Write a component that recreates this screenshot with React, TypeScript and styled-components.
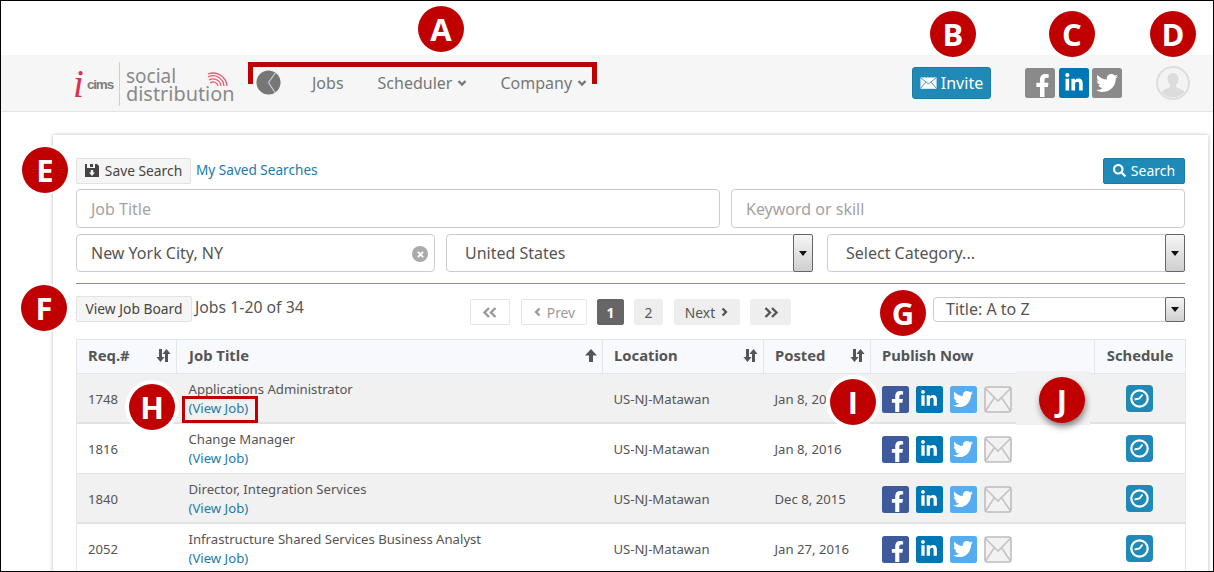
import React from "react";
import styled, { createGlobalStyle } from "styled-components";
import { FaFacebookF, FaLinkedinIn, FaTwitter, FaSearch, FaTimes } from "react-icons/fa";

const Global = createGlobalStyle`
  html, body { margin: 0; padding: 0; background: #fff; }
  body { font-family: "Noto Sans", "Open Sans", sans-serif; color: #555; }
  * { box-sizing: border-box; }
`;

const Frame = styled.div`
  position: relative;
  width: 1214px;
  height: 572px;
  overflow: hidden;
  border: 1px solid #000;
  padding-top: 54px;
  background: #fff;
`;

const NavBar = styled.header`
  display: flex;
  align-items: center;
  height: 57px;
  padding: 0 23px 0 71px;
  background: #f6f6f6;
  border-bottom: 1px solid #e3e3e3;
`;

const Logo = styled.div`
  display: flex;
  align-items: center;
  width: 184px;
  height: 44px;
  margin-top: 1px;
`;

const LogoI = styled.span`
  font: italic 400 39px/1 "Liberation Serif", serif;
  color: #d8324f;
  width: 14px;
  padding-left: 1px;
`;

const LogoCims = styled.span`
  font: 700 13.5px/1 "Liberation Sans", sans-serif;
  letter-spacing: -1.2px;
  color: #7d7d7d;
  width: 33px;
  padding-left: 1px;
  margin-top: 2px;
`;

const LogoText = styled.div`
  position: relative;
  height: 44px;
  border-left: 1px solid #cfcfcf;
  padding: 6px 0 0 6px;
  color: #8a8a8a;
  font: 400 19.9px/17px "Noto Sans", sans-serif;
`;

const LogoLine = styled.div<{ $size: number }>`
  display: block;
  font-size: ${(p) => p.$size}px;
`;

const Signal = styled.svg`
  position: absolute;
  left: 87px;
  top: 8px;
`;

const PieIcon = styled.svg`
  display: block;
  margin-top: -1px;
`;

const NavLink = styled.a<{ $gap: number }>`
  display: flex;
  align-items: center;
  gap: 5px;
  margin-left: ${(p) => p.$gap}px;
  font-size: 16px;
  color: #777;
`;

const NavRight = styled.div`
  margin-left: auto;
  display: flex;
  align-items: center;
`;

const InviteButton = styled.button`
  display: flex;
  align-items: center;
  justify-content: center;
  gap: 4px;
  width: 79px;
  height: 32px;
  padding: 0;
  background: #1f8ab8;
  border: 1px solid #1a7aa4;
  border-radius: 3px;
  color: #fff;
  font: 400 16px "Noto Sans", sans-serif;
`;

const NavSocial = styled.div`
  display: flex;
  gap: 3.5px;
  margin-left: 34px;
`;

const Avatar = styled.svg`
  display: block;
  margin-left: 34px;
`;

const Tile = styled.span<{ $bg: string; $size: number }>`
  display: flex;
  align-items: center;
  justify-content: center;
  overflow: hidden;
  width: ${(p) => p.$size}px;
  height: ${(p) => p.$size}px;
  border-radius: 2.5px;
  background: ${(p) => p.$bg};
  color: #fff;
`;

const FbGlyph = styled(FaFacebookF)`
  margin: 5px -5px 0 0;
`;

const Card = styled.main`
  margin: 23px 5px 0 52px;
  padding: 23px 23px 0;
  height: 500px;
  background: #fff;
  box-shadow: 0 0 4px rgba(0, 0, 0, 0.28);
`;

const TopRow = styled.div`
  display: flex;
  align-items: center;
  height: 26px;
`;

const PlainButton = styled.button<{ $width: number }>`
  display: flex;
  align-items: center;
  justify-content: center;
  gap: 6px;
  width: ${(p) => p.$width}px;
  height: 26px;
  padding: 0 0 2px;
  background: #f5f5f5;
  border: 1px solid #e2e2e2;
  border-radius: 2px;
  color: #444;
  font: 400 13.8px "Noto Sans", sans-serif;
`;

const SavedLink = styled.a`
  margin-left: 5px;
  margin-top: -4px;
  font-size: 13.6px;
  color: #1c7ba6;
`;

const SearchButton = styled.button`
  display: flex;
  align-items: center;
  justify-content: center;
  gap: 5px;
  margin-left: auto;
  width: 82px;
  height: 26px;
  padding: 0 0 2px;
  background: #1f8ab8;
  border: 1px solid #1a7aa4;
  border-radius: 2px;
  color: #fff;
  font: 400 14px "Noto Sans", sans-serif;
`;

const FieldRow = styled.div<{ $cols: string; $top: number }>`
  display: grid;
  grid-template-columns: ${(p) => p.$cols};
  gap: 11px;
  margin-top: ${(p) => p.$top}px;
`;

const Field = styled.div<{ $height: number; $muted?: boolean; $pad?: number; $trim?: number; $top?: number; $lift?: number }>`
  position: relative;
  display: flex;
  align-items: center;
  height: ${(p) => p.$height}px;
  margin-right: ${(p) => p.$trim ?? 0}px;
  margin-top: ${(p) => p.$top ?? 0}px;
  padding: 0 0 ${(p) => p.$lift ?? 0}px ${(p) => p.$pad ?? 14}px;
  background: #fff;
  border: 1px solid #ccc;
  border-radius: 4px;
  font-size: 16px;
  color: ${(p) => (p.$muted ? "#a3a3a3" : "#555")};
`;

const ClearIcon = styled.span`
  position: absolute;
  right: 6px;
  top: 11px;
  display: flex;
  align-items: center;
  justify-content: center;
  width: 16px;
  height: 16px;
  border-radius: 50%;
  background: #aaa;
  color: #fff;
`;

const SelectArrow = styled.span`
  position: absolute;
  right: -1px;
  top: -1px;
  bottom: -1px;
  width: 20px;
  display: flex;
  align-items: center;
  justify-content: center;
  background: linear-gradient(#f6f6f6, #cfcfcf);
  border: 1px solid #666;
  border-radius: 2px;
  &::after {
    content: "";
    border-left: 4.5px solid transparent;
    border-right: 4.5px solid transparent;
    border-top: 5px solid #111;
  }
`;

const Rule = styled.hr`
  margin: 11px 0 12px;
  border: 0;
  border-top: 1px solid #7b90a8;
`;

const ToolRow = styled.div`
  display: grid;
  grid-template-columns: 394px 1fr 252px;
  height: 29px;
`;

const ToolLeft = styled.div`
  display: flex;
  gap: 3px;
`;

const JobsCount = styled.span`
  font-size: 15.8px;
  line-height: 22px;
  color: #555;
`;

const Pager = styled.nav`
  display: flex;
  padding-top: 3px;
  height: 29px;
`;

const PageItem = styled.span<{ $w: number; $gap: number; $tone: "ghost" | "solid" | "active" }>`
  display: flex;
  align-items: center;
  justify-content: center;
  gap: 4px;
  width: ${(p) => p.$w}px;
  height: 26px;
  margin-left: ${(p) => p.$gap}px;
  border-radius: 2px;
  font-size: 13.8px;
  border: 1px solid ${(p) => (p.$tone === "active" ? "#666" : p.$tone === "ghost" ? "#e6e6e6" : "#eee")};
  background: ${(p) => (p.$tone === "active" ? "#666" : p.$tone === "ghost" ? "#fff" : "#eee")};
  color: ${(p) => (p.$tone === "active" ? "#fff" : p.$tone === "ghost" ? "#999" : "#555")};
  font-weight: ${(p) => (p.$tone === "active" ? 700 : 400)};
`;

const JobTable = styled.table`
  width: 1109px;
  margin-top: 14px;
  table-layout: fixed;
  border-collapse: collapse;
`;

const HeadCell = styled.th<{ $center?: boolean }>`
  height: 34px;
  padding: ${(p) => (p.$center ? "0 0 3px" : "0 5px 3px 11px")};
  background: #f7f9fd;
  border: 1px solid #e3e6ea;
  font-size: 14.8px;
  font-weight: 700;
  color: #555;
  text-align: ${(p) => (p.$center ? "center" : "left")};
  &:nth-child(2) { padding-left: 12px; }
`;

const HeadInner = styled.div`
  display: flex;
  align-items: center;
  justify-content: space-between;
`;

const Row = styled.tr<{ $odd: boolean }>`
  height: 50px;
  background: ${(p) => (p.$odd ? "#f1f1f1" : "#fff")};
  border-bottom: 1px solid #e2e2e2;
`;

const Cell = styled.td<{ $center?: boolean; $heavy: boolean }>`
  padding: 1px 0 0 11px;
  font-size: 13.15px;
  color: #555;
  text-align: ${(p) => (p.$center ? "center" : "left")};
  box-shadow: ${(p) => (p.$heavy ? "inset 0 -1px 0 #e2e2e2" : "none")};
  &:nth-child(2) { padding-left: 12px; }
  &:first-child { border-left: 1px solid #e3e6ea; }
  &:last-child { border-right: 1px solid #e3e6ea; padding: 0; }
`;

const TitleText = styled.div`
  line-height: 19px;
`;

const ViewLink = styled.a`
  display: block;
  line-height: 19px;
  color: #1c7ba6;
`;

const Publish = styled.div`
  display: flex;
  align-items: center;
  gap: 7px;
`;

const ClockWrap = styled.div`
  display: flex;
  justify-content: center;
`;

const Badge = styled.div<{ $x: number; $y: number; $ring?: number; $shadow?: boolean }>`
  position: absolute;
  left: ${(p) => p.$x - 23 - 1}px;
  top: ${(p) => p.$y - 23 - 1}px;
  display: flex;
  align-items: center;
  justify-content: center;
  width: 46px;
  height: 46px;
  border-radius: 50%;
  background: #c00000;
  color: #fff;
  font: 700 31px/1 "Open Sans", sans-serif;
  box-shadow: ${(p) =>
    p.$shadow ? "1px 4px 6px rgba(0,0,0,.45)" : `0 0 0 ${p.$ring ?? 2}px #fff`};
`;

const Patch = styled.div`
  position: absolute;
  left: 1015px;
  top: 370px;
  width: 74px;
  height: 54px;
  background: #f1f1f1;
`;

const Bracket = styled.div`
  position: absolute;
  left: 247px;
  top: 61px;
  width: 349px;
  height: 22px;
  border: 5px solid #c00000;
  border-bottom: 0;
`;

const HighlightBox = styled.div`
  position: absolute;
  left: 181px;
  top: 395px;
  width: 76px;
  height: 27px;
  border: 3px solid #c00000;
`;

const MailIcon = ({ size = 20, color = "#fff" }: { size?: number; color?: string }) => (
  <svg width={size} height={size * 0.72} viewBox="0 0 20 14.4">
    <rect x="0.5" y="0.5" width="19" height="13.4" fill={color} />
    <path d="M0.5 .8 L10 8 L19.5 .8 M.5 13.6 L7 6 M19.5 13.6 L13 6" fill="none" stroke="#1f8ab8" strokeWidth="1" />
  </svg>
);

const MailTile = () => (
  <svg width="28" height="27" viewBox="0 0 28 27">
    <rect x="1" y="1" width="26" height="25" rx="2.5" fill="#f2f2f2" stroke="#bdbdbd" strokeWidth="1.6" />
    <path d="M1.5 2.5 L14 15 L26.5 2.5 M1.5 25 L10.5 11.5 M26.5 25 L17.5 11.5" fill="none" stroke="#c4c4c4" strokeWidth="1.6" />
  </svg>
);

const ClockTile = () => (
  <svg width="27" height="27" viewBox="0 0 27 27">
    <rect width="27" height="27" rx="4" fill="#1f8ab8" />
    <circle cx="13.5" cy="13.5" r="8.2" fill="none" stroke="#fff" strokeWidth="2.2" />
    <path d="M8.5 14.5 L13.5 13.5 L16.5 9.5" fill="none" stroke="#fff" strokeWidth="1.8" />
  </svg>
);

const SortIcon = () => (
  <svg width="15" height="13" viewBox="0 0 15 13">
    <path d="M3 0h3v8h2.6L4.5 13 .4 8H3z M9 5h-2.6L10.5 0l4.1 5H12v8H9z" fill="#555" />
  </svg>
);

const ArrowUpIcon = () => (
  <svg width="12" height="13" viewBox="0 0 12 13">
    <path d="M6 0L12 6.5H8V13H4V6.5H0z" fill="#555" />
  </svg>
);

const SaveIcon = () => (
  <svg width="14" height="13" viewBox="0 0 14 13">
    <path d="M0 0h2v4h8V0h2l2 2v11H0z" fill="#444" />
    <path d="M5 0h3v3H5z" fill="#444" />
    <path d="M5.8 6h2.4v2.5H10L7 12 4 8.5h1.8z" fill="#f5f5f5" />
  </svg>
);

const Chevron = ({ dir, size = 10 }: { dir: "down" | "left" | "right"; size?: number }) => {
  const d = dir === "down" ? "M1.5 3 L5 6.5 L8.5 3" : dir === "left" ? "M6.5 1.5 L3 5 L6.5 8.5" : "M3.5 1.5 L7 5 L3.5 8.5";
  return (
    <svg width={size} height={size} viewBox="0 0 10 10">
      <path d={d} fill="none" stroke="currentColor" strokeWidth="2.3" />
    </svg>
  );
};

const DoubleChevron = ({ dir }: { dir: "left" | "right" }) => (
  <svg width="16" height="11" viewBox="0 0 16 11">
    <path
      d={dir === "left" ? "M7 1 L2.5 5.5 L7 10 M13.5 1 L9 5.5 L13.5 10" : "M2.5 1 L7 5.5 L2.5 10 M9 1 L13.5 5.5 L9 10"}
      fill="none"
      stroke="currentColor"
      strokeWidth="2.4"
    />
  </svg>
);

const Social = ({ size, gray }: { size: number; gray?: boolean }) => {
  const glyph = Math.round(size * 0.66);
  return (
    <>
      <Tile $size={size} $bg={gray ? "#8a8a8a" : "#3f5a9a"}>
        <FbGlyph size={glyph + 3} />
      </Tile>
      <Tile $size={size} $bg="#0077b5">
        <FaLinkedinIn size={glyph} />
      </Tile>
      <Tile $size={size} $bg={gray ? "#8a8a8a" : "#55acee"}>
        <FaTwitter size={glyph + 2} />
      </Tile>
    </>
  );
};

const jobs = [
  { id: "1748", title: "Applications Administrator", date: "Jan 8, 2016" },
  { id: "1816", title: "Change Manager", date: "Jan 8, 2016" },
  { id: "1840", title: "Director, Integration Services", date: "Dec 8, 2015" },
  { id: "2052", title: "Infrastructure Shared Services Business Analyst", date: "Jan 27, 2016" },
];

const badges: { l: string; x: number; y: number; ring?: number; shadow?: boolean }[] = [
  { l: "A", x: 441, y: 29 },
  { l: "B", x: 953, y: 34 },
  { l: "C", x: 1072, y: 34 },
  { l: "D", x: 1173, y: 34 },
  { l: "E", x: 45, y: 170 },
  { l: "F", x: 44, y: 308 },
  { l: "G", x: 903, y: 313 },
  { l: "H", x: 152, y: 407, ring: 4 },
  { l: "I", x: 853, y: 402, ring: 4 },
  { l: "J", x: 1062, y: 400, shadow: true },
];

export default function App() {
  return (
    <Frame>
      <Global />
      <NavBar>
        <Logo>
          <LogoI>i</LogoI>
          <LogoCims>cims</LogoCims>
          <LogoText>
            <LogoLine $size={19}>social</LogoLine>
            <LogoLine $size={19.9}>distribution</LogoLine>
            <Signal width="22" height="20" viewBox="0 0 22 20">
              <g fill="none" stroke="#e4596f" strokeWidth="1.3">
                <path d="M3 13a5 5 0 0 1 8 3" />
                <path d="M2 10a8 8 0 0 1 12 6" />
                <path d="M1 7a11 11 0 0 1 16 9" />
                <path d="M1 4a14 14 0 0 1 19 12" />
              </g>
            </Signal>
          </LogoText>
        </Logo>
        <PieIcon width="25" height="25" viewBox="0 0 25 25">
          <circle cx="12.5" cy="12.5" r="12" fill="#777" />
          <path d="M12.5 12.5 L20 2 M12.5 12.5 L19 22.5" stroke="#c7d3de" strokeWidth="1.2" fill="none" />
        </PieIcon>
        <NavLink $gap={31}>Jobs</NavLink>
        <NavLink $gap={34}>
          Scheduler <Chevron dir="down" />
        </NavLink>
        <NavLink $gap={33}>
          Company <Chevron dir="down" />
        </NavLink>
        <NavRight>
          <InviteButton>
            <MailIcon size={17} />
            Invite
          </InviteButton>
          <NavSocial>
            <Social size={30} gray />
          </NavSocial>
          <Avatar width="34" height="34" viewBox="0 0 34 34">
            <circle cx="17" cy="17" r="16" fill="#f3f3f3" stroke="#dedede" strokeWidth="2" />
            <path d="M17 7c3.6 0 5.4 2.6 5.4 6 0 2.6-1 4.6-2.4 6v2l7 3.5c.8.5 1 1 1 2A15 15 0 0 1 6 26.5c0-1 .2-1.5 1-2L14 21v-2c-1.4-1.4-2.4-3.4-2.4-6 0-3.4 1.8-6 5.4-6z" fill="#dcdcdc" />
          </Avatar>
        </NavRight>
      </NavBar>

      <Card>
        <TopRow>
          <PlainButton $width={115}>
            <SaveIcon />
            Save Search
          </PlainButton>
          <SavedLink>My Saved Searches</SavedLink>
          <SearchButton>
            <FaSearch size={13} />
            Search
          </SearchButton>
        </TopRow>
        <FieldRow $cols="644px 454px" $top={5}>
          <Field $height={39} $muted>Job Title</Field>
          <Field $height={39} $muted>Keyword or skill</Field>
        </FieldRow>
        <FieldRow $cols="359px 1fr 358px" $top={6}>
          <Field $height={38}>
            New York City, NY
            <ClearIcon>
              <FaTimes size={9} />
            </ClearIcon>
          </Field>
          <Field $height={38} $pad={18} $trim={3}>
            United States
            <SelectArrow />
          </Field>
          <Field $height={38} $pad={18}>
            Select Category...
            <SelectArrow />
          </Field>
        </FieldRow>
        <Rule />
        <ToolRow>
          <ToolLeft>
            <PlainButton $width={116}>View Job Board</PlainButton>
            <JobsCount>Jobs 1-20 of 34</JobsCount>
          </ToolLeft>
          <Pager>
            <PageItem $tone="ghost" $w={40} $gap={0}>
              <DoubleChevron dir="left" />
            </PageItem>
            <PageItem $tone="ghost" $w={66} $gap={11}>
              <Chevron dir="left" />
              Prev
            </PageItem>
            <PageItem $tone="active" $w={27} $gap={10}>1</PageItem>
            <PageItem $tone="solid" $w={29} $gap={10}>2</PageItem>
            <PageItem $tone="solid" $w={66} $gap={11}>
              Next
              <Chevron dir="right" />
            </PageItem>
            <PageItem $tone="solid" $w={41} $gap={10}>
              <DoubleChevron dir="right" />
            </PageItem>
          </Pager>
          <Field $height={25} $pad={12} $top={1} $lift={2}>
            Title: A to Z
            <SelectArrow />
          </Field>
        </ToolRow>

        <JobTable>
          <colgroup>
            <col width="100" />
            <col width="426" />
            <col width="161" />
            <col width="107" />
            <col width="224" />
            <col width="91" />
          </colgroup>
          <thead>
            <tr>
              <HeadCell><HeadInner>Req.#<SortIcon /></HeadInner></HeadCell>
              <HeadCell><HeadInner>Job Title<ArrowUpIcon /></HeadInner></HeadCell>
              <HeadCell><HeadInner>Location<SortIcon /></HeadInner></HeadCell>
              <HeadCell><HeadInner>Posted<SortIcon /></HeadInner></HeadCell>
              <HeadCell>Publish Now</HeadCell>
              <HeadCell $center>Schedule</HeadCell>
            </tr>
          </thead>
          <tbody>
            {jobs.map((j, i) => {
              const odd = i % 2 === 0;
              return (
                <Row key={j.id} $odd={odd}>
                  <Cell $heavy={odd}>{j.id}</Cell>
                  <Cell $heavy={odd}>
                    <TitleText>{j.title}</TitleText>
                    <ViewLink>(View Job)</ViewLink>
                  </Cell>
                  <Cell $heavy={odd}>US-NJ-Matawan</Cell>
                  <Cell $heavy={odd}>{j.date}</Cell>
                  <Cell $heavy={odd}>
                    <Publish>
                      <Social size={27} />
                      <MailTile />
                    </Publish>
                  </Cell>
                  <Cell $center $heavy={odd}>
                    <ClockWrap>
                      <ClockTile />
                    </ClockWrap>
                  </Cell>
                </Row>
              );
            })}
          </tbody>
        </JobTable>
      </Card>

      <Bracket />
      <HighlightBox />
      <Patch />
      {badges.map((b) => (
        <Badge key={b.l} $x={b.x} $y={b.y} $ring={b.ring} $shadow={b.shadow}>
          {b.l}
        </Badge>
      ))}
    </Frame>
  );
}
